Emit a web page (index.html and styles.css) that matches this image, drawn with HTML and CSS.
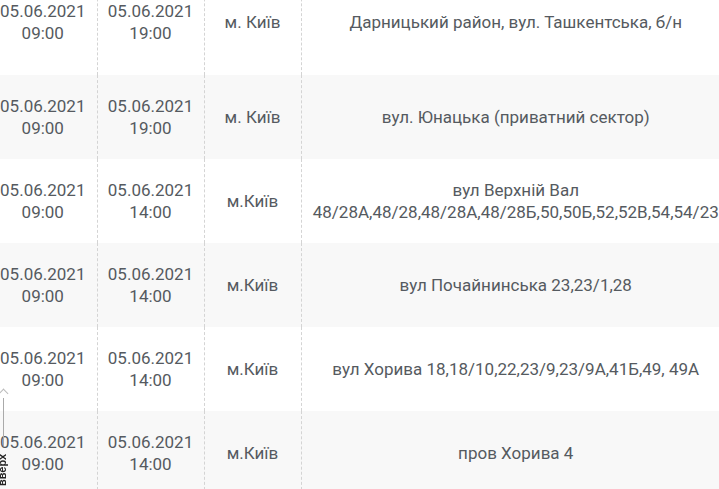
FILE: index.html
```html
<!DOCTYPE html>
<html lang="uk">
<head>
<meta charset="utf-8">
<link rel="stylesheet" href="styles.css">
</head>
<body>
<table class="schedule">
  <colgroup>
    <col class="c-start"><col class="c-end"><col class="c-city"><col class="c-addr">
  </colgroup>
  <tbody>
    <tr class="first"><td>05.06.2021<br>09:00</td><td>05.06.2021<br>19:00</td><td>м. Київ</td><td>Дарницький район, вул. Ташкентська, б/н</td></tr>
    <tr><td>05.06.2021<br>09:00</td><td>05.06.2021<br>19:00</td><td>м. Київ</td><td>вул. Юнацька (приватний сектор)</td></tr>
    <tr><td>05.06.2021<br>09:00</td><td>05.06.2021<br>14:00</td><td>м.Київ</td><td>вул Верхній Вал<br>48/28А,48/28,48/28А,48/28Б,50,50Б,52,52В,54,54/23</td></tr>
    <tr><td>05.06.2021<br>09:00</td><td>05.06.2021<br>14:00</td><td>м.Київ</td><td>вул Почайнинська 23,23/1,28</td></tr>
    <tr><td>05.06.2021<br>09:00</td><td>05.06.2021<br>14:00</td><td>м.Київ</td><td>вул Хорива 18,18/10,22,23/9,23/9А,41Б,49, 49А</td></tr>
    <tr><td>05.06.2021<br>09:00</td><td>05.06.2021<br>14:00</td><td>м.Київ</td><td>пров Хорива 4</td></tr>
  </tbody>
</table>
<a class="to-top" href="#">
  <span class="to-top-caret"></span>
  <span class="to-top-line"></span>
  <span class="to-top-text">вверх</span>
</a>
</body>
</html>
```

FILE: styles.css
```css
html, body {
  margin: 0;
  padding: 0;
  background: #fff;
  overflow: hidden;
  width: 719px;
  height: 489px;
}
body {
  font-family: Roboto, "Liberation Sans", sans-serif;
  font-size: 17px;
  color: #555a60;
}
.schedule {
  border-collapse: collapse;
  table-layout: fixed;
  width: 741px;
  margin-left: -11px;
  margin-top: -31px;
}
.c-start { width: 108px; }
.c-end { width: 107px; }
.c-city { width: 97px; }
.c-addr { width: 429px; }
.schedule td {
  height: 84px;
  padding: 0;
  text-align: center;
  vertical-align: middle;
  line-height: 22px;
  border-left: 1px dashed #d4d4d4;
  box-sizing: border-box;
  white-space: nowrap;
}
.schedule tr.first td { height: 106px; }
.schedule td:first-child { border-left: none; }
.schedule tr:nth-child(even) td { background: #f8f8f8; }
.to-top {
  position: fixed;
  left: 0;
  top: 384px;
  width: 14px;
  height: 105px;
  text-decoration: none;
}
.to-top-caret {
  position: absolute;
  left: 0;
  top: 6px;
  width: 6px;
  height: 6px;
  border-left: 1px solid #bbb;
  border-top: 1px solid #bbb;
  transform: rotate(45deg);
}
.to-top-line {
  position: absolute;
  left: 3px;
  top: 14px;
  width: 1px;
  height: 48px;
  background: #aaa;
}
.to-top-text {
  position: absolute;
  left: -14px;
  top: 80px;
  font-family: "Liberation Sans", sans-serif;
  font-weight: bold;
  font-size: 11px;
  line-height: 12px;
  color: #222;
  transform: rotate(-90deg);
  transform-origin: center;
  white-space: nowrap;
}
```
